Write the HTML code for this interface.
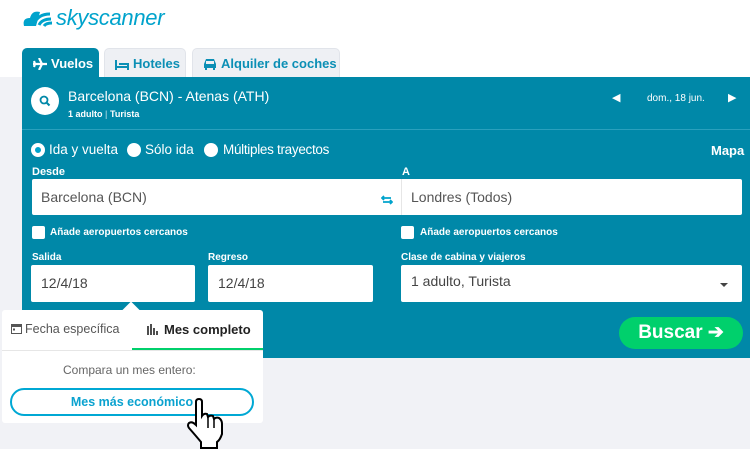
<!DOCTYPE html>
<html><head><meta charset="utf-8"><style>
*{box-sizing:border-box;margin:0;padding:0}
body{width:750px;height:449px;overflow:hidden;background:#fff;font-family:"Liberation Sans",Arial,sans-serif;position:relative}
.abs{position:absolute}
.grey{left:0;top:77px;width:750px;height:372px;background:#f1f2f6}
.panel{left:22px;top:77px;width:728px;height:281px;background:#0088a8}
.tab{top:48px;height:30px;border-radius:5px 5px 0 0;font-weight:bold;font-size:13px;line-height:29px;color:#0b8fb5;background:#eef0f4;border:1px solid #e1e4ea;border-bottom:none;padding-left:10px;white-space:nowrap}
.tab svg{vertical-align:-2px;margin-right:4px}
.w{color:#fff}
.inp{background:#fff;border-radius:2px;height:36px;font-size:14px;color:#444;line-height:36px;padding-left:10px}
.lbl{color:#fff;font-size:11px;font-weight:bold}
.cb{width:13px;height:13px;background:#fff;border-radius:2px}
.rad{width:14px;height:14px;border-radius:50%;background:#fff}
</style></head><body>
<div class="abs" style="left:22px;top:5px;color:#00a3cc;font-size:22px;font-style:italic;white-space:nowrap;letter-spacing:-0.3px">
<svg width="34" height="22" viewBox="0 0 34 22" style="vertical-align:-3px"><path d="M2 20 Q0 12 8 12 Q10 4 18 6 L14 20Z" fill="#00a3cc"/><path d="M12 18 Q16 8 28 8" stroke="#00a3cc" stroke-width="3" fill="none"/><path d="M17 19 Q20 13 29 13" stroke="#00a3cc" stroke-width="3" fill="none"/><path d="M22 20 Q24 17 30 17" stroke="#00a3cc" stroke-width="3" fill="none"/></svg>skyscanner</div>
<div class="abs grey"></div>
<div class="abs tab" style="left:22px;width:77px;background:#0088a8;border-color:#0088a8;color:#fff;height:31px"><svg width="14" height="12" viewBox="0 0 14 12"><path d="M0 6 L14 6 M6 0 L9 6 L6 12 M1 3 L2 6 L1 9" stroke="#fff" stroke-width="2.2" fill="none"/></svg>Vuelos</div>
<div class="abs tab" style="left:104px;width:82px"><svg width="14" height="10" viewBox="0 0 14 10"><path d="M1 0 V10 M1 7 H13 V10 M4 4 H13 V7" stroke="#0b8fb5" stroke-width="2" fill="none"/></svg>Hoteles</div>
<div class="abs tab" style="left:192px;width:148px"><svg width="14" height="12" viewBox="0 0 14 12"><path d="M3 1 H11 L13 6 V10 H1 V6 Z" fill="#0b8fb5"/><rect x="3" y="3" width="8" height="3" fill="#eef0f4"/><rect x="2" y="10" width="2" height="2" fill="#0b8fb5"/><rect x="10" y="10" width="2" height="2" fill="#0b8fb5"/></svg>Alquiler de coches</div>
<div class="abs panel"></div>
<div class="abs" style="left:22px;top:129px;width:728px;height:1px;background:#2aa0bd"></div>
<div class="abs" style="left:31px;top:87px;width:28px;height:28px;border-radius:50%;background:#fff"><svg width="28" height="28" viewBox="0 0 28 28"><circle cx="13" cy="13" r="3.5" stroke="#0088a8" stroke-width="1.8" fill="none"/><path d="M15.5 15.5 L18.5 18.5" stroke="#0088a8" stroke-width="2"/></svg></div>
<div class="abs w" style="left:68px;top:88px;font-size:14px">Barcelona (BCN) - Atenas (ATH)</div>
<div class="abs w" style="left:68px;top:109px;font-size:9px;font-weight:bold">1 adulto <span style="opacity:.5">|</span> Turista</div>
<div class="abs w" style="left:612px;top:91px;font-size:11px">◀</div>
<div class="abs w" style="left:647px;top:93px;font-size:10px">dom., 18 jun.</div>
<div class="abs w" style="left:728px;top:91px;font-size:11px">▶</div>
<div class="abs rad" style="left:31px;top:143px;border:4px solid #fff;background:#00a3cc"></div>
<div class="abs w" style="left:49px;top:142px;font-size:13.5px">Ida y vuelta</div>
<div class="abs rad" style="left:127px;top:143px"></div>
<div class="abs w" style="left:145px;top:142px;font-size:13.5px">Sólo ida</div>
<div class="abs rad" style="left:204px;top:143px"></div>
<div class="abs w" style="left:223px;top:142px;font-size:13.5px;letter-spacing:-0.3px">Múltiples trayectos</div>
<div class="abs w" style="left:711px;top:143px;font-size:13px;font-weight:bold">Mapa</div>
<div class="abs lbl" style="left:32px;top:166px">Desde</div>
<div class="abs lbl" style="left:402px;top:166px">A</div>
<div class="abs inp" style="left:32px;top:179px;width:710px"></div>
<div class="abs" style="left:32px;top:179px;width:340px;line-height:36px;font-size:14px;color:#555;padding-left:9px">Barcelona (BCN)</div>
<div class="abs" style="left:401px;top:179px;width:1px;height:36px;background:#e6e6e6"></div>
<div class="abs" style="left:381px;top:192px"><svg width="12" height="10" viewBox="0 0 12 10"><path d="M1 3 H10 M3 1 L1 3 L3 5 M11 7 H2 M9 5 L11 7 L9 9" stroke="#00a3cc" stroke-width="1.8" fill="none"/></svg></div>
<div class="abs" style="left:411px;top:179px;line-height:36px;font-size:14px;color:#555">Londres (Todos)</div>
<div class="abs cb" style="left:32px;top:226px"></div>
<div class="abs lbl" style="left:50px;top:227px;font-size:10px">Añade aeropuertos cercanos</div>
<div class="abs cb" style="left:401px;top:226px"></div>
<div class="abs lbl" style="left:420px;top:227px;font-size:10px">Añade aeropuertos cercanos</div>
<div class="abs lbl" style="left:32px;top:252px;font-size:10px">Salida</div>
<div class="abs lbl" style="left:208px;top:252px;font-size:10px">Regreso</div>
<div class="abs lbl" style="left:401px;top:252px;font-size:10px">Clase de cabina y viajeros</div>
<div class="abs inp" style="left:31px;top:265px;width:164px;height:37px;line-height:37px">12/4/18</div>
<div class="abs inp" style="left:208px;top:265px;width:165px;height:37px;line-height:37px">12/4/18</div>
<div class="abs inp" style="left:401px;top:265px;width:341px;height:37px;line-height:33px">1 adulto, Turista</div>
<div class="abs" style="left:720px;top:283px;width:0;height:0;border:4px solid transparent;border-top:4px solid #444"></div>
<div class="abs" style="left:619px;top:317px;width:124px;height:32px;border-radius:16px;background:#00d06c;color:#fff;font-weight:bold;font-size:19px;text-align:center;line-height:32px">Buscar ➔</div>
<div class="abs" style="left:2px;top:310px;width:261px;height:113px;background:#fff;border-radius:3px"></div>
<div class="abs" style="left:125px;top:304px;width:12px;height:12px;background:#fff;transform:rotate(45deg)"></div>
<div class="abs" style="left:2px;top:350px;width:261px;height:1px;background:#e6e6e6"></div>
<div class="abs" style="left:132px;top:348px;width:131px;height:2px;background:#00d06c"></div>
<div class="abs" style="left:11px;top:322px;font-size:12.5px;color:#555;white-space:nowrap"><svg width="11" height="11" viewBox="0 0 11 11" style="vertical-align:-1px;margin-right:3px"><rect x="0.5" y="1.5" width="10" height="9" fill="none" stroke="#555"/><rect x="0.5" y="1.5" width="10" height="2.5" fill="#555"/><rect x="2" y="5.5" width="2" height="2" fill="#555"/></svg>Fecha específica</div>
<div class="abs" style="left:147px;top:322px;font-size:13px;color:#222;font-weight:bold;white-space:nowrap"><svg width="12" height="11" viewBox="0 0 12 11" style="vertical-align:-1px;margin-right:5px"><path d="M1 2 V11 M4 0 V11 M7 4 V11 M10 7 V11" stroke="#222" stroke-width="1.6"/></svg>Mes completo</div>
<div class="abs" style="left:63px;top:363px;font-size:12px;color:#666">Compara un mes entero:</div>
<div class="abs" style="left:10px;top:388px;width:244px;height:28px;border:2px solid #00a8d4;border-radius:14px;text-align:center;line-height:24px;font-size:12.5px;font-weight:bold;color:#0aa2cf">Mes más económico</div>
<svg class="abs" style="left:186px;top:398px" width="44" height="51" viewBox="0 0 44 51"><path d="M10 4 Q10 1 13 1 Q16 1 16 4 L16 18 Q18 15 21 16 L22 19 Q24 17 27 18 L28 21 Q30 19 33 20 Q36 22 36 26 L36 36 Q34 42 31 44 L31 50 L15 50 L15 44 Q10 38 3 30 Q1 27 3 25 Q6 23 10 27 Z" fill="#fff" stroke="#000" stroke-width="2"/><path d="M22 19 L22 30 M28 21 L28 30" stroke="#000" stroke-width="1.5"/></svg>
</body></html>
